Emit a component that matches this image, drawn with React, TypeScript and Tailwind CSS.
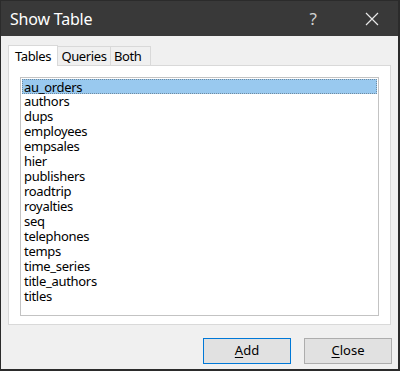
import React from 'react'

const tables = [
  'au_orders', 'authors', 'dups', 'employees', 'empsales', 'hier', 'publishers',
  'roadtrip', 'royalties', 'seq', 'telephones', 'temps', 'time_series', 'title_authors', 'titles',
]

const App: React.FC = () => {
  return (
    <div className="w-[400px] h-[371px] bg-[#2b2b2b] p-[1px] pr-[2px] pb-[2px] font-['Noto_Sans',sans-serif]">
      <div className="flex flex-col h-full bg-[#f0f0f0]">
        {/* title bar */}
        <div className="h-[35px] bg-[#393939] flex items-center text-white">
          <span className="ml-[9px] text-[16px] leading-none flex-1 tracking-[-0.2px]">Show Table</span>
          <span className="text-[17px] text-[#d0d0d0] mr-[48px] leading-none">?</span>
          <svg width="14" height="14" viewBox="0 0 14 14" className="mr-[19px]">
            <path d="M1 1 L13 13 M13 1 L1 13" stroke="#e8e8e8" strokeWidth="1.2" />
          </svg>
        </div>

        {/* tabs */}
        <div className="flex items-end px-[7px] mt-[8px] h-[21px] text-[13px] text-black leading-none tracking-[-0.4px]">
          <div className="w-[50px] h-[21px] pt-[4px] text-center bg-white border border-b-0 border-[#d9d9d9] relative z-10 -mb-[1px]">Tables</div>
          <div className="w-[53px] h-[19px] pt-[3px] text-center border border-l-0 border-b-0 border-[#d9d9d9]">Queries</div>
          <div className="w-[40px] h-[19px] pt-[3px] pl-[3px] border border-l-0 border-b-0 border-[#d9d9d9]">Both</div>
        </div>

        {/* panel */}
        <div className="mx-[7px] h-[260px] bg-white border border-[#d9d9d9] pt-[11px] px-[11px]">
          <div className="h-[239px] border border-[#c3c3c3] p-[1px] text-[13px] tracking-[-0.3px]">
            {tables.map((t, i) => (
              <div
                key={t}
                className={
                  i === 0
                    ? 'h-[15px] pl-[1px] leading-[14px] bg-[#99c9ef] border border-dotted border-[#6f8aa0]'
                    : 'h-[15px] pl-[2px] leading-[15px]'
                }
              >
                {t}
              </div>
            ))}
          </div>
        </div>

        {/* buttons */}
        <div className="flex justify-end gap-[13px] mt-[13px] pr-[6px]">
          <button className="w-[88px] h-[26px] bg-[#e1e1e1] border border-[#0078d7] text-[13px] text-black">
            <span className="underline underline-offset-2">A</span>dd
          </button>
          <button className="w-[88px] h-[26px] bg-[#e1e1e1] border border-[#adadad] text-[13px] text-black">
            <span className="underline underline-offset-2">C</span>lose
          </button>
        </div>
      </div>
    </div>
  )
}

export default App
